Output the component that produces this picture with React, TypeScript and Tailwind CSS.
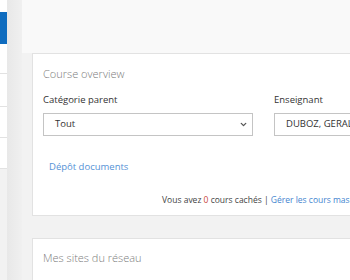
import { ChevronDown } from "lucide-react";

const font = { fontFamily: '"Open Sans", "Noto Sans", sans-serif' };

function SelectBox({ value, className }: { value: string; className: string }) {
  return (
    <div
      className={`h-[23px] border border-[#c4c4c4] bg-white flex items-center justify-between pl-[11px] pr-[4px] text-[9.5px] text-[#333] ${className}`}
    >
      <span className="whitespace-nowrap">{value}</span>
      <ChevronDown className="w-[9px] h-[9px] text-[#555] shrink-0" strokeWidth={3.5} />
    </div>
  );
}

export default function App() {
  return (
    <div className="w-[350px] h-[280px] overflow-hidden flex bg-[#f2f2f2]" style={font}>
      {/* Drawer */}
      <div className="w-[7px] shrink-0 flex flex-col">
        <div className="h-[12px] bg-white" />
        <div className="h-[32px] bg-[#0f6cbf]" />
        <div className="h-[30px] bg-white border-b border-[#e2e2e2]" />
        <div className="h-[33px] bg-white border-b border-[#e2e2e2]" />
        <div className="h-[31px] bg-white border-b border-[#e2e2e2]" />
        <div className="h-[31px] bg-white border-b border-[#e2e2e2]" />
      </div>
      <div className="w-[15px] shrink-0 bg-gradient-to-r from-[#e8e8e8] to-[#f0f0f0]" />

      {/* Main */}
      <div className="flex-1 min-w-0 flex flex-col">
        <div className="h-[53px] shrink-0 bg-[#f9f9f9]" />
        <div className="pl-[10px] flex flex-col">
          <div className="border border-[#e2e2e2] bg-white w-[400px] h-[163px] pt-[10px] pl-[10px]">
            <div className="text-[11px] leading-[20px] font-light text-[#7d7d7d]">Course overview</div>
            <div className="flex gap-[21px] mt-[7px]">
              <div className="flex flex-col w-[210px] shrink-0">
                <div className="text-[9.5px] leading-[18px] text-[#333]">Catégorie parent</div>
                <SelectBox value="Tout" className="mt-[4px]" />
              </div>
              <div className="flex flex-col w-[180px] shrink-0">
                <div className="text-[9.5px] leading-[18px] text-[#333]">Enseignant</div>
                <SelectBox value="DUBOZ, GERALDINE" className="mt-[4px]" />
              </div>
            </div>
            <div className="mt-[22px] pl-[6px] text-[9.5px] leading-[18px] text-[#5592d6]">Dépôt documents</div>
            <div className="mt-[16px] pl-[119px] text-[8.5px] leading-[16px] text-[#444] whitespace-nowrap">
              Vous avez <span className="text-[#c9473b]">0</span> cours cachés |{" "}
              <span className="text-[#4485cf]">Gérer les cours masqués</span>
            </div>
          </div>
          <div className="h-[22px]" />
          <div className="border border-[#e2e2e2] bg-white w-[400px] h-[60px] pt-[9px] pl-[10px]">
            <div className="text-[11px] leading-[20px] font-light text-[#7d7d7d]">Mes sites du réseau</div>
          </div>
        </div>
      </div>
    </div>
  );
}
